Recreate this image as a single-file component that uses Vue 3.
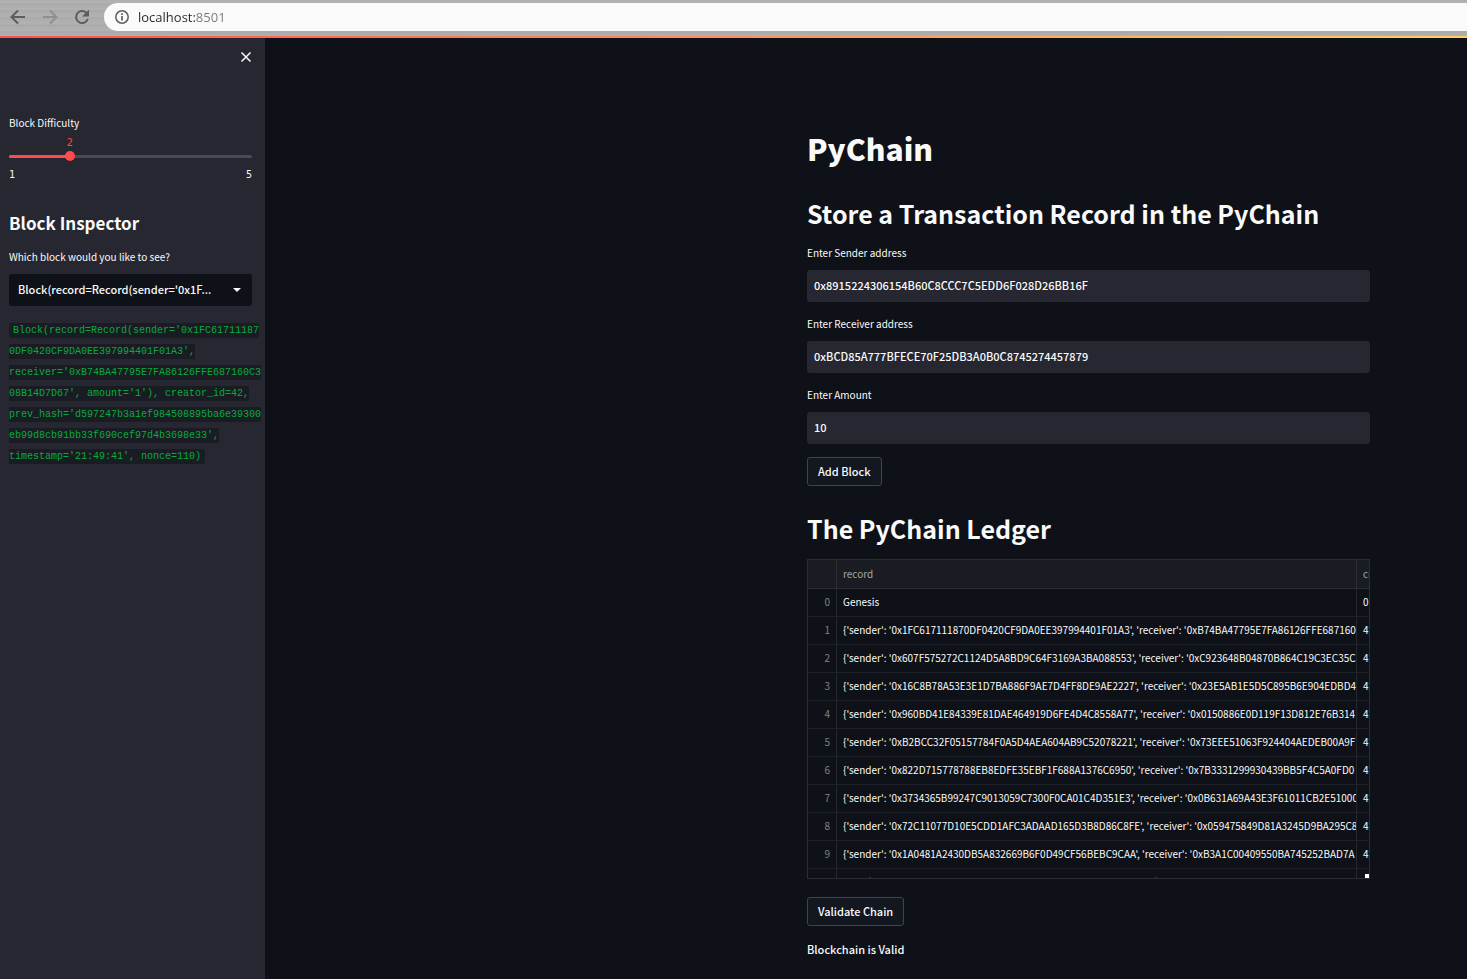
<script setup>
import { ref, computed } from 'vue'

const url = ref('localhost:8501')
const difficulty = ref(2)
const markLeft = computed(() => `${((difficulty.value - 1) / 4) * 100}%`)

const sender = ref('0x8915224306154B60C8CCC7C5EDD6F028D26BB16F')
const receiver = ref('0xBCD85A777BFECE70F25DB3A0B0C8745274457879')
const amount = ref('10')

const codeLines = [
  "Block(record=Record(sender='0x1FC61711187",
  "0DF0420CF9DA0EE397994401F01A3',",
  "receiver='0xB74BA47795E7FA86126FFE687160C3",
  "08B14D7D67', amount='1'), creator_id=42,",
  "prev_hash='d597247b3a1ef984508895ba6e39300",
  "eb99d8cb91bb33f690cef97d4b3698e33',",
  "timestamp='21:49:41', nonce=110)",
]
const blockLabel = `${codeLines[0].slice(0, 32)}...`

const transfers = [
  ['0x1FC617111870DF0420CF9DA0EE397994401F01A3', '0xB74BA47795E7FA86126FFE687160C3'],
  ['0x607F575272C1124D5A8BD9C64F3169A3BA088553', '0xC923648B04870B864C19C3EC35C'],
  ['0x16C8B78A53E3E1D7BA886F9AE7D4FF8DE9AE2227', '0x23E5AB1E5D5C895B6E904EDBD4'],
  ['0x960BD41E84339E81DAE464919D6FE4D4C8558A77', '0x0150886E0D119F13D812E76B314'],
  ['0xB2BCC32F05157784F0A5D4AEA604AB9C52078221', '0x73EEE51063F924404AEDEB00A9F'],
  ['0x822D715778788EB8EDFE35EBF1F688A1376C6950', '0x7B3331299930439BB5F4C5A0FD0'],
  ['0x3734365B99247C9013059C7300F0CA01C4D351E3', '0x0B631A69A43E3F61011CB2E51000'],
  ['0x72C11077D10E5CDD1AFC3ADAAD165D3B8D86C8FE', '0x059475849D81A3245D9BA295C8'],
  ['0x1A0481A2430DB5A832669B6F0D49CF56BEBC9CAA', '0xB3A1C00409550BA745252BAD7A'],
  ['0x5A0481A2430D15A832669160D049C756E1C9C11', '0x'],
]
const rows = [
  { record: 'Genesis', creator: 0 },
  ...transfers.map(([s, r]) => ({ record: `{'sender': '${s}', 'receiver': '${r}`, creator: 42 })),
]
</script>

<template>
  <div class="page">
    <header class="toolbar">
      <button class="nav" aria-label="Back">
        <svg width="24" height="24" viewBox="0 0 24 24"><path d="M19 12H6M12 5.5 5.5 12l6.500 6.500" fill="none" stroke="#5a5d62" stroke-width="2" /></svg>
      </button>
      <button class="nav" aria-label="Forward">
        <svg width="24" height="24" viewBox="0 0 24 24"><path d="M5 12H18M12 5.500 18.500 12 12 18.500" fill="none" stroke="#8d8f91" stroke-width="2" /></svg>
      </button>
      <button class="nav" aria-label="Reload">
        <svg width="24" height="24" viewBox="0 0 24 24"><path d="M16.300 7.700A6 6 0 1 0 17.800 14" fill="none" stroke="#5a5d62" stroke-width="2" /><path d="M19 4.500v7h-7z" fill="#5a5d62" /></svg>
      </button>
      <div class="address">
        <svg width="16" height="16" viewBox="0 0 16 16"><circle cx="8" cy="8" r="6.200" fill="none" stroke="#5a5d62" stroke-width="1.500" /><path d="M8 7v4.500M8 4.300v1.600" stroke="#5a5d62" stroke-width="1.700" /></svg>
        <input v-model="url" class="url" aria-label="Address" />
      </div>
    </header>
    <div class="decoration"></div>

    <div class="body">
      <aside class="sidebar">
        <button class="close" aria-label="Close sidebar">
          <svg width="12" height="12" viewBox="0 0 12 12"><path d="M1.500 1.500l9 9M10.500 1.500l-9 9" stroke="#fafafa" stroke-width="1.500" /></svg>
        </button>

        <label class="label" for="difficulty">Block Difficulty</label>
        <div class="slider">
          <output class="mark" for="difficulty" :style="{ left: markLeft }">{{ difficulty }}</output>
          <div class="track"><div class="filled" :style="{ width: markLeft }"></div></div>
          <input id="difficulty" v-model.number="difficulty" type="range" min="1" max="5" />
        </div>
        <div class="ticks"><span>1</span><span>5</span></div>

        <h2 class="side-title">Block Inspector</h2>
        <label class="label" for="block">Which block would you like to see?</label>
        <div class="select">
          <select id="block">
            <option>{{ blockLabel }}</option>
          </select>
          <svg width="8" height="4" viewBox="0 0 8 4"><path d="M0 0h8L4 4z" fill="#fafafa" /></svg>
        </div>
        <p class="code"><code><template v-for="(line, i) in codeLines" :key="i"><br v-if="i" />{{ line }}</template></code></p>
      </aside>

      <main class="main">
        <h1>PyChain</h1>
        <h2>Store a Transaction Record in the PyChain</h2>

        <div class="field">
          <label class="label" for="sender">Enter Sender address</label>
          <input id="sender" v-model="sender" type="text" />
        </div>
        <div class="field">
          <label class="label" for="receiver">Enter Receiver address</label>
          <input id="receiver" v-model="receiver" type="text" />
        </div>
        <div class="field">
          <label class="label" for="amount">Enter Amount</label>
          <input id="amount" v-model="amount" type="text" />
        </div>
        <button class="btn">Add Block</button>

        <h2 class="ledger-title">The PyChain Ledger</h2>
        <div class="frame">
          <table>
            <colgroup><col class="c-index" /><col class="c-record" /><col class="c-creator" /></colgroup>
            <thead>
              <tr><th></th><th scope="col">record</th><th scope="col">creator_id</th></tr>
            </thead>
            <tbody>
              <tr v-for="(row, i) in rows" :key="i">
                <th scope="row">{{ i }}</th>
                <td>{{ row.record }}</td>
                <td>{{ row.creator }}</td>
              </tr>
            </tbody>
          </table>
          <span class="corner"></span>
        </div>

        <button class="btn">Validate Chain</button>
        <p class="status">Blockchain is Valid</p>
      </main>
    </div>
  </div>
</template>

<style>
body {
  background: #0e1117;
}
</style>

<style scoped>
.page {
  min-height: 100vh;
  display: flex;
  flex-direction: column;
  background: #0e1117;
  color: #fafafa;
  font-family: "Noto Sans CJK SC", sans-serif;
  font-size: 11px;
}
* {
  box-sizing: border-box;
}
button,
input,
select {
  font: inherit;
  color: inherit;
  border: 0;
  margin: 0;
  padding: 0;
  background: none;
  outline: 0;
}
.toolbar {
  display: flex;
  align-items: center;
  height: 36px;
  padding: 0 0 2px 6px;
  gap: 8px;
  background: repeating-linear-gradient(180deg, #adadad 0, #b3b3b3 2px, #a9a9a9 4px, #b0b0b0 7px);
}
.nav {
  display: flex;
  width: 24px;
}
.address {
  flex: 1;
  display: flex;
  align-items: center;
  gap: 8px;
  height: 28px;
  margin-left: 2px;
  padding-left: 10px;
  background: #fafafa;
  border-radius: 14px 0 0 14px;
}
.url {
  flex: 1;
  height: 24px;
  font-family: "Open Sans", sans-serif;
  font-size: 13px;
  color: transparent;
  background: linear-gradient(90deg, #26282b 58px, #73777c 58px);
  -webkit-background-clip: text;
  background-clip: text;
}
.decoration {
  height: 2px;
  background: linear-gradient(90deg, #ff5050, #ffd060);
}
.body {
  flex: 1;
  display: flex;
}
.sidebar {
  flex: 0 0 265px;
  min-width: 0;
  padding: 13px 13px 0 9px;
  background: #262730;
}
.close {
  display: flex;
  margin: 0 0 51px auto;
}
.label {
  display: block;
  font-size: 10px;
  line-height: 18px;
}
.slider {
  position: relative;
  height: 33px;
  padding-top: 23px;
}
.mark {
  position: absolute;
  top: 3px;
  transform: translateX(-50%);
  color: #ff4b4b;
  font: 10px/16px "DejaVu Sans Mono", monospace;
}
.track {
  height: 3px;
  border-radius: 2px;
  background: #494a55;
}
.filled {
  height: 3px;
  border-radius: 2px;
  background: #ff4b4b;
}
.slider input {
  position: absolute;
  left: -5px;
  top: 19px;
  width: calc(100% + 10px);
  height: 10px;
  appearance: none;
}
.slider input::-webkit-slider-thumb {
  appearance: none;
  width: 10px;
  height: 10px;
  border-radius: 50%;
  background: #ff4b4b;
}
.ticks {
  display: flex;
  justify-content: space-between;
  font: 10px/20px "DejaVu Sans Mono", monospace;
}
.side-title {
  margin: 23px 0 10px;
  font-size: 17px;
  line-height: 30px;
  font-weight: 700;
}
.select {
  display: flex;
  align-items: center;
  margin-top: 8px;
  padding: 0 11px 0 9px;
  background: #0e1117;
  border-radius: 3px;
}
.select select {
  flex: 1;
  min-width: 0;
  height: 32px;
  margin-right: 8px;
  padding-bottom: 2px;
  appearance: none;
  font-weight: 500;
}
.code {
  margin: 14px 0 0;
  font: 10px/21px "Liberation Mono", monospace;
}
.code code {
  padding: 2px 4px;
  color: #09ab3b;
  background: #1a1c24;
  border-radius: 3px;
  font: inherit;
  white-space: nowrap;
}
.main {
  flex: 1;
  min-width: 0;
  padding: 86px 97px 0 542px;
}
h1 {
  margin: 0;
  font-size: 30px;
  line-height: 48px;
  font-weight: 900;
}
.main h2 {
  margin: 22px 0 12px;
  font-size: 25px;
  line-height: 38px;
  font-weight: 700;
}
.field {
  margin-bottom: 13px;
}
.field input {
  display: block;
  width: 100%;
  height: 32px;
  margin-top: 8px;
  padding: 0 7px 2px;
  background: #262730;
  border-radius: 3px;
  font-weight: 500;
}
.btn {
  display: block;
  height: 29px;
  padding: 0 10px 2px;
  border: 1px solid #41444c;
  border-radius: 3px;
  background: #131720;
  font-weight: 500;
}
.main .ledger-title {
  margin: 23px 0 12px;
}
.frame {
  position: relative;
  height: 320px;
  margin-bottom: 18px;
  border: 1px solid #2b2d33;
  overflow: hidden;
}
table {
  table-layout: fixed;
  border-collapse: separate;
  border-spacing: 0;
  width: 609px;
  font-size: 10px;
}
.c-index {
  width: 29px;
}
.c-record {
  width: 520px;
}
.c-creator {
  width: 60px;
}
th,
td {
  height: 28px;
  padding: 0 0 2px 6px;
  border-right: 1px solid #25282e;
  border-bottom: 1px solid #1d2026;
  line-height: 20px;
  font-weight: 400;
  text-align: left;
  overflow: hidden;
  white-space: nowrap;
}
thead th {
  height: 29px;
  padding-bottom: 0;
  background: #1a1c24;
  border-color: #2b2d33;
  color: #a3a4a8;
}
tbody th {
  padding: 0 6px 2px 0;
  text-align: right;
  color: #808288;
}
.corner {
  position: absolute;
  right: 0;
  bottom: 0;
  width: 4px;
  height: 4px;
  background: #fff;
}
.status {
  margin: 13px 0 0;
  line-height: 20px;
  font-weight: 500;
}
</style>
